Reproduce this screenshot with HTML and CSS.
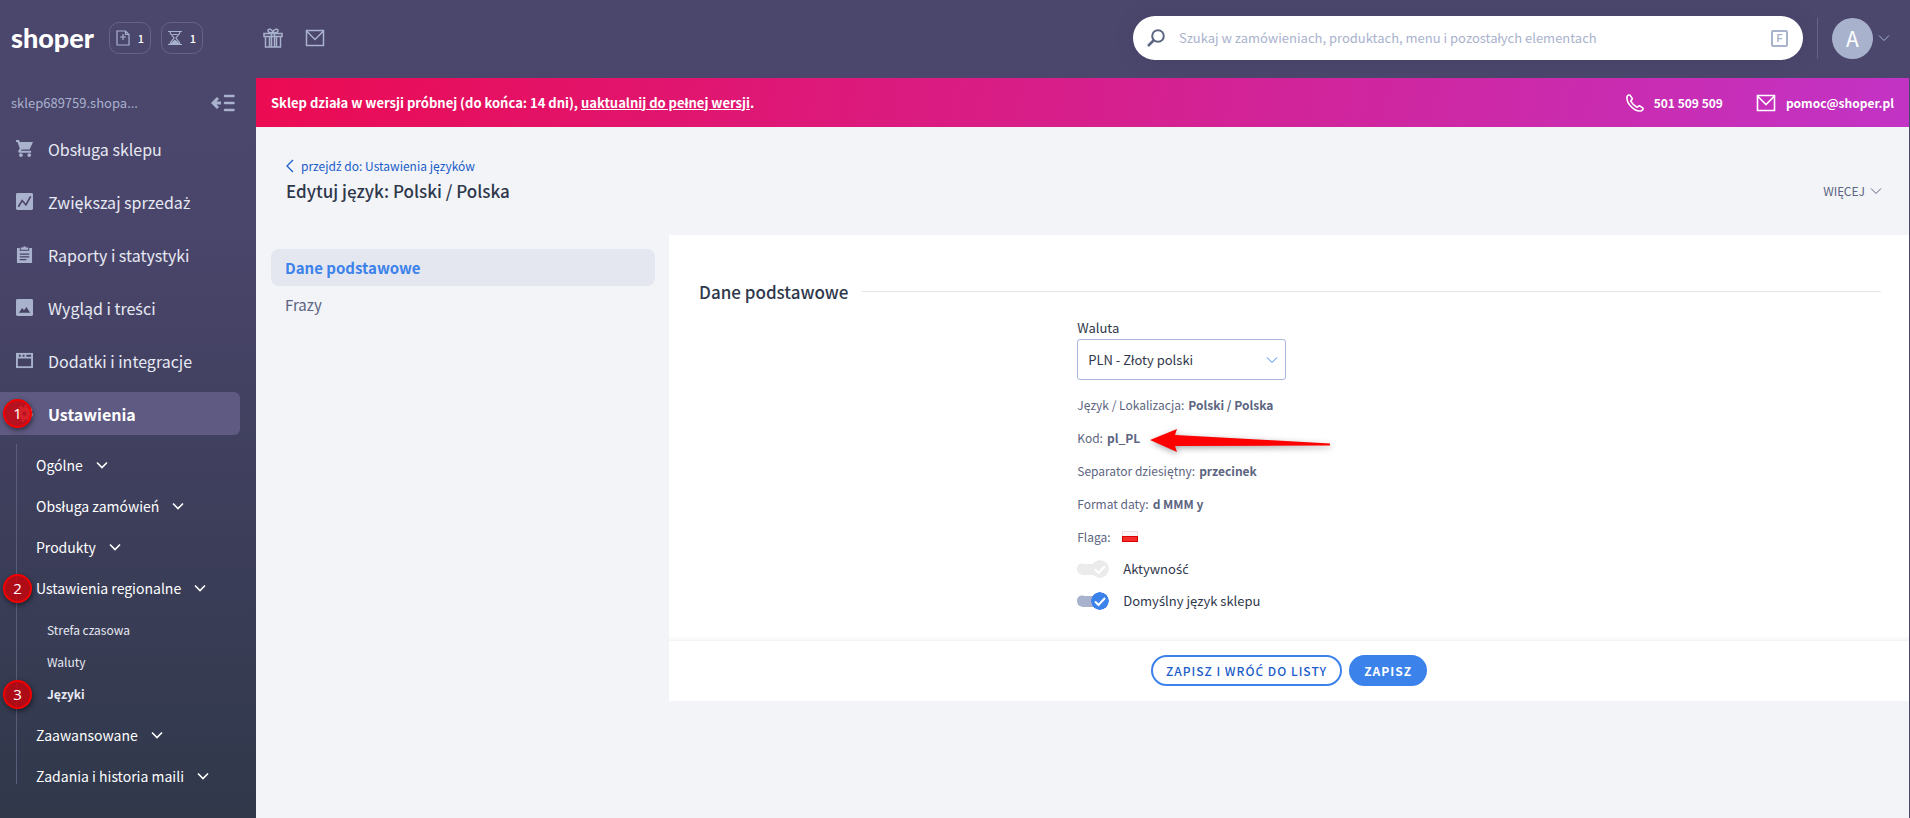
FILE: index.html
```html
<!DOCTYPE html>
<html lang="pl">
<head>
<meta charset="utf-8">
<title>Edytuj język: Polski / Polska</title>
<link rel="stylesheet" href="styles.css">
</head>
<body>
<svg class="sprite" aria-hidden="true">
  <symbol id="chevron" viewBox="0 0 12 12"><path d="M1 3.5l5 5 5-5" fill="none" stroke="currentColor"/></symbol>
  <symbol id="mail" viewBox="0 0 20 18"><path d="M1.5 1.5h17v15h-17zM1.5 2l8.500 8.500L18.500 2" fill="none" stroke="currentColor"/></symbol>
  <symbol id="tick" viewBox="0 0 32 18"><path d="M18 9.500l3.500 3.500 6.500-7" fill="none" stroke="#fff" stroke-width="2"/></symbol>
</svg>
<header class="topbar">
  <div class="brand">
    <a class="logo" href="#">shoper</a>
    <div class="counters">
      <button class="counter" type="button">
        <svg width="14" height="16" viewBox="0 0 14 16" fill="none" stroke="currentColor" stroke-width="1.200"><path d="M1 1h8.500L13 4.500V15H1zM9.500 1v3.500H13M7 4v6M4 7h6"/></svg>
        <span>1</span>
      </button>
      <button class="counter" type="button">
        <svg width="14" height="16" viewBox="0 0 14 16" fill="none" stroke="currentColor" stroke-width="1.200"><path d="M0 1.500h14M0 14.500h14M2 1.500C2 5 6 6.500 6 8s-4 3-4 6.500M12 1.500C12 5 8 6.500 8 8s4 3 4 6.500M4.500 4.500h5"/><path d="M3.500 14c.5-2 2-2.500 3.500-3.500 1.500 1 3 1.500 3.500 3.500z" fill="currentColor"/></svg>
        <span>1</span>
      </button>
    </div>
  </div>
  <div class="quick">
    <button class="icon-button" type="button" aria-label="Prezenty">
      <svg width="20" height="20" viewBox="0 0 20 20" fill="none" stroke="currentColor" stroke-width="1.500"><path d="M1 5.500h18v3H1zM2.500 8.500v10.500h15V8.500M6.500 8.500V19M13.500 8.500V19M8.500 5.500V19M11.500 5.500V19M10 5C8 5 5 4.500 5 2.800 5 .3 9 .5 10 4.500 11 .5 15 .3 15 2.800 15 4.500 12 5 10 5z"/></svg>
    </button>
    <button class="icon-button" type="button" aria-label="Wiadomości">
      <svg width="20" height="18"><use href="#mail" stroke-width="1.500"/></svg>
    </button>
  </div>
  <form class="search">
    <svg class="search-glass" width="18" height="18" viewBox="0 0 18 18" fill="none" stroke="currentColor" stroke-width="2"><circle cx="11" cy="7" r="5.800"/><path d="M7 11l-6 6" stroke-width="2.500"/></svg>
    <input class="search-input" type="search" aria-label="Szukaj" placeholder="Szukaj w zamówieniach, produktach, menu i pozostałych elementach">
    <kbd class="search-key">F</kbd>
  </form>
  <button class="account" type="button" aria-label="Konto">
    <span class="avatar">A</span>
    <svg width="12" height="12"><use href="#chevron"/></svg>
  </button>
</header>

<div class="layout">
  <nav class="sidebar">
    <div class="shop">
      <span>sklep689759.shopa...</span>
      <button class="icon-button" type="button" aria-label="Zwiń menu">
        <svg width="24" height="18" viewBox="0 0 24 18" fill="none" stroke="currentColor" stroke-width="3"><path d="M14 2h8.500M14 9h8.500M14 16h8.500" stroke-linecap="round" stroke-width="2.500"/><path d="M2 9h8M7 4L2 9l5 5"/></svg>
      </button>
    </div>
    <ul class="menu">
      <li><a class="menu-link" href="#"><svg class="menu-icon" viewBox="0 0 18 18" fill="currentColor"><path d="M0 0h3.200l1 2H18l-3.600 8H6l-.8 1.500H16v2H4c-1.500 0-2-1.500-1.300-2.600L4 9 1.500 2H0z"/><circle cx="5.200" cy="16" r="2"/><circle cx="14" cy="16" r="2"/></svg><span>Obsługa sklepu</span></a></li>
      <li><a class="menu-link" href="#"><svg class="menu-icon" viewBox="0 0 18 18"><rect width="18" height="18" rx="1.500" fill="currentColor"/><path d="M2.500 14.500l4-6.500 4 4.500 5-9" fill="none" stroke="#4b456c" stroke-width="1.800"/></svg><span>Zwiększaj sprzeda<span class="acute">ż</span></span></a></li>
      <li><a class="menu-link" href="#"><svg class="menu-icon" viewBox="0 0 18 18"><path d="M1 2h3v3h10V2h3v16H1zM5 1.500h2.500C8 0 10 0 10.500 1.500H13V4H5z" fill="currentColor"/><path d="M4 8.500h10M4 11.500h10M4 14.500h7" stroke="#474367" stroke-width="1.300"/></svg><span>Raporty i statystyki</span></a></li>
      <li><a class="menu-link" href="#"><svg class="menu-icon" viewBox="0 0 18 18"><rect width="18" height="18" rx="1.500" fill="currentColor"/><path d="M3 14.500l3.500-5 2 2.500 2.500-3.500 4 6z" fill="#464365"/></svg><span>Wygląd i tre<span class="acute">ś</span>ci</span></a></li>
      <li><a class="menu-link" href="#"><svg class="menu-icon" viewBox="0 0 18 18"><path d="M0 1h18v16H0z" fill="currentColor"/><path d="M2 7h14v8H2zM3 3h2v2H3zM7 3h2v2H7zM11 3h5v2h-5z" fill="#444263"/></svg><span>Dodatki i integracje</span></a></li>
      <li class="marked">
        <a class="menu-link active" href="#"><svg class="menu-icon" viewBox="0 0 18 18" fill="none" stroke="currentColor"><circle cx="9" cy="9" r="4.500" stroke-width="4.500"/><circle cx="9" cy="9" r="7.800" stroke-width="2.400" stroke-dasharray="3.100 3.030"/></svg><span>Ustawienia</span></a>
        <span class="badge">1</span>
      </li>
    </ul>
    <ul class="submenu">
      <li><a class="sub-link" href="#">Ogólne <svg class="sub-chevron"><use href="#chevron"/></svg></a></li>
      <li><a class="sub-link" href="#">Obsługa zamówień <svg class="sub-chevron"><use href="#chevron"/></svg></a></li>
      <li><a class="sub-link" href="#">Produkty <svg class="sub-chevron"><use href="#chevron"/></svg></a></li>
      <li class="marked">
        <a class="sub-link" href="#">Ustawienia regionalne <svg class="sub-chevron"><use href="#chevron"/></svg></a>
        <span class="badge badge-sub">2</span>
      </li>
      <li>
        <ul class="leaves">
          <li><a class="leaf" href="#">Strefa czasowa</a></li>
          <li><a class="leaf" href="#">Waluty</a></li>
          <li class="marked"><a class="leaf current" href="#">Języki</a><span class="badge badge-leaf">3</span></li>
        </ul>
      </li>
      <li><a class="sub-link" href="#">Zaawansowane <svg class="sub-chevron"><use href="#chevron"/></svg></a></li>
      <li><a class="sub-link" href="#">Zadania i historia maili <svg class="sub-chevron"><use href="#chevron"/></svg></a></li>
    </ul>
  </nav>

  <main class="main">
    <div class="banner">
      <p>Sklep działa w wersji próbnej (do końca: 14 dni), <a href="#">uaktualnij do pełnej wersji</a>.</p>
      <div class="contacts">
        <a class="contact" href="#"><svg width="18" height="18" viewBox="0 0 18 18" fill="none" stroke="currentColor" stroke-width="1.600"><path d="M1.200 2.200C2 1 3.500.6 4.200 1.400L6.300 4.600C6.500 5.600 4.800 6 4.800 7.200 6 9.500 8.500 12 11 13.200 12.200 13.200 12.400 11.500 13.500 11.800L16.700 13.800C17.500 14.800 16.800 16 15.500 16.800 9 18.500-.5 9 1.200 2.200z"/></svg>501 509 509</a>
        <a class="contact" href="#"><svg width="20" height="18"><use href="#mail" stroke-width="1.600"/></svg>pomoc@shoper.pl</a>
      </div>
    </div>
    <div class="page-head">
      <div>
        <a class="back" href="#"><svg width="8" height="14" viewBox="0 0 8 14" fill="none" stroke="currentColor" stroke-width="1.300"><path d="M7 1L1 7l6 6"/></svg><span>przejd<span class="acute">ź</span> do: Ustawienia języków</span></a>
        <h1 class="title">Edytuj język: Polski / Polska</h1>
      </div>
      <button class="more" type="button">WIĘCEJ <svg width="12" height="12"><use href="#chevron"/></svg></button>
    </div>
    <div class="content">
      <nav class="tabs">
        <a class="tab selected" href="#">Dane podstawowe</a>
        <a class="tab" href="#">Frazy</a>
      </nav>
      <form class="panel">
        <div class="panel-body">
          <h2 class="section-title">Dane podstawowe</h2>
          <div class="fields">
            <div class="field">
              <label class="label" for="currency">Waluta</label>
              <div class="select">
                <select id="currency"><option>PLN - Złoty polski</option></select>
                <svg width="12" height="12"><use href="#chevron"/></svg>
              </div>
            </div>
            <p class="row">Język / Lokalizacja: <b>Polski / Polska</b></p>
            <p class="row marked">Kod: <b>pl_PL</b>
              <svg class="arrow" width="190" height="36" viewBox="0 0 190 36"><path d="M4 15L31 4l-2 6 155 8.500v2L29 21l2 6z" fill="#f00"/></svg>
            </p>
            <p class="row">Separator dziesiętny: <b>przecinek</b></p>
            <p class="row">Format daty: <b>d MMM y</b></p>
            <p class="row">Flaga: <svg class="flag" width="16" height="11" viewBox="0 0 16 11"><rect width="16" height="11" fill="#f0dede"/><rect x="1" y="1" width="14" height="5" fill="#f8f6f6"/><rect y="5" width="16" height="6" fill="#dc0000"/><rect x="1" y="6" width="14" height="4" fill="#f52a2a"/></svg></p>
            <label class="switch-row"><span class="switch"><input type="checkbox" checked disabled><svg width="32" height="18"><use href="#tick"/></svg></span><span>Aktywno<span class="acute">ść</span></span></label>
            <label class="switch-row"><span class="switch"><input type="checkbox" checked><svg width="32" height="18"><use href="#tick"/></svg></span><span>Domy<span class="acute">ś</span>lny język sklepu</span></label>
          </div>
        </div>
        <div class="actions">
          <button class="action" type="button">ZAPISZ I WRÓ<span class="acute">Ć</span> DO LISTY</button>
          <button class="action primary" type="submit">ZAPISZ</button>
        </div>
      </form>
    </div>
  </main>
</div>
</body>
</html>
```

FILE: styles.css
```css
* { box-sizing: border-box; }

body {
  margin: 0;
  min-height: 100vh;
  display: flex;
  flex-direction: column;
  background: #4b466c;
  color: #2f384b;
  font: 13px/20px "Noto Sans CJK SC", "Noto Sans", sans-serif;
}

ul, h1, h2, p { margin: 0; padding: 0; }
ul { list-style: none; }
a { color: inherit; text-decoration: none; }
button { padding: 0; border: 0; background: none; color: inherit; font: inherit; cursor: pointer; }
svg { display: block; flex: none; }
.sprite { position: absolute; width: 0; height: 0; }
.marked { position: relative; }

/* Polish letters that the main family has no glyphs for */
.acute { font-family: "Noto Sans", sans-serif; line-height: 1; }

/* Top bar */
.topbar { display: flex; align-items: center; height: 78px; padding: 0 20px 2px 0; color: #a9b2cd; }
.brand { display: flex; align-items: center; width: 256px; padding-left: 11px; }
.logo { width: 98px; color: #fff; font: 900 27px/32px Lato, sans-serif; }
.counters { display: flex; gap: 10px; }
.counter { display: flex; align-items: center; justify-content: center; gap: 8px; width: 42px; height: 32px; border: 1px solid #676288; border-radius: 10px; }
.counter span { color: #fff; font-size: 11px; font-weight: 500; }
.quick { display: flex; align-items: center; gap: 22px; padding-left: 7px; }
.icon-button { color: #a9b2cd; }
.search { display: flex; align-items: center; width: 670px; height: 44px; margin-left: auto; padding: 0 15px 0 14px; border-radius: 22px; background: #fff; box-shadow: 0 0 20px rgba(50, 45, 80, .15); }
.search-glass { color: #5c6581; }
.search-input { flex: 1; min-width: 0; padding: 0 0 0 14px; border: 0; outline: 0; background: none; color: #2f384b; font: inherit; }
.search-input::placeholder { color: #a9b2cd; opacity: 1; }
.search-key { width: 17px; height: 17px; border: 2px solid #a9b2cd; border-radius: 2px; color: #a9b2cd; font: bold 10px/14px "Liberation Sans", sans-serif; text-align: center; }
.account { display: flex; align-items: center; gap: 5px; height: 40px; margin-left: 14px; padding-left: 14px; border-left: 1px solid #676288; }
.avatar { width: 41px; height: 41px; border-radius: 50%; background: #a9b2cd; color: #fff; font-size: 21px; line-height: 40px; }

/* Sidebar */
.layout { display: flex; flex: 1; }
.sidebar { flex: 0 0 256px; background: linear-gradient(#4b466c, #4a456b 20%, #30384a); color: #e6e9f2; }
.shop { display: flex; align-items: center; justify-content: space-between; height: 49px; padding: 0 21px 0 11px; color: #a9b2cd; }
.menu { display: flex; flex-direction: column; gap: 10px; }
.menu-link { display: flex; align-items: center; gap: 15px; height: 43px; margin-right: 16px; padding-left: 16px; border-radius: 0 6px 6px 0; font-size: 16px; }
.menu-link.active { background: #5f5a82; color: #fff; font-weight: 700; }
.menu-icon { width: 17px; height: 17px; color: #a9b2cd; }
.active .menu-icon { color: #ff9aa0; }
.badge { position: absolute; left: 3px; top: 7px; width: 29px; height: 29px; border: 2px solid #f20000; border-radius: 50%; background: rgba(204, 0, 8, .8); box-shadow: 1px 2px 5px rgba(0, 0, 0, .5); color: #fff; font: 15px/25px "Open Sans", sans-serif; text-align: center; }
.submenu { margin: 9px 0 0 16px; padding-left: 1px; background: linear-gradient(#5c5b7a, #5c5b7a) 0 0 / 1px calc(100% - 12px) no-repeat; }
.sub-link { display: flex; align-items: center; gap: 13px; height: 41px; padding-left: 19px; color: #fff; font-size: 14px; }
.sub-chevron { width: 12px; height: 12px; stroke-width: 1.600; }
.badge-sub { left: -14px; }
.badge-leaf { left: -14px; top: 2px; }
.leaves { padding: 6px 0 4px; }
.leaf { display: flex; align-items: center; height: 32px; padding-left: 30px; font-size: 12px; }
.leaf.current { font-weight: 700; }

/* Main column */
.main { flex: 1; min-width: 0; margin-right: 1px; background: #f2f4f8; }
.banner { display: flex; align-items: center; justify-content: space-between; height: 49px; padding: 0 15px; background: linear-gradient(100deg, #eb0b52, #c233c5); color: #fff; font-weight: 700; }
.banner p a { text-decoration: underline; }
.contacts { display: flex; gap: 33px; font-size: 12px; }
.contact { display: flex; align-items: center; gap: 10px; }
.page-head { display: flex; align-items: flex-end; justify-content: space-between; height: 108px; padding: 0 27px 32px 30px; }
.back { display: flex; align-items: center; gap: 7px; margin-bottom: 3px; color: #1b5cc9; font-size: 12px; }
.title { font-size: 17px; font-weight: 500; line-height: 24px; }
.more { display: flex; align-items: center; gap: 5px; color: #5c6581; font-size: 12px; line-height: 24px; }
.content { display: grid; grid-template-columns: 384px 1fr; gap: 14px; padding-left: 15px; }
.tabs { padding-top: 14px; }
.tab { display: block; padding: 0 14px; border-radius: 8px; color: #5c6581; font-size: 15px; line-height: 37px; }
.tab.selected { background: #e4e7f0; color: #3c82eb; font-weight: 700; }

/* Form */
.panel { background: #fff; }
.panel-body { padding: 43px 28px 20px 30px; box-shadow: inset 0 -6px 6px -6px rgba(0, 0, 0, .1); }
.section-title { display: flex; align-items: center; gap: 14px; font-size: 17px; font-weight: 500; line-height: 28px; }
.section-title::after { content: ""; flex: 1; height: 1px; margin-bottom: 2px; background: #e6e6e6; }
.fields { padding: 10px 0 4px 32%; }
.field { margin-bottom: 8px; }
.label { display: block; line-height: 23px; }
.select { display: grid; align-items: center; width: 209px; }
.select > * { grid-area: 1 / 1; }
.select select { height: 41px; padding: 0 10px; border: 1px solid #a9b7dd; border-radius: 3px; background: #fff; color: #2f384b; font: inherit; appearance: none; }
.select svg { justify-self: end; margin-right: 8px; color: #3c82eb; pointer-events: none; }
.row { display: flex; align-items: center; gap: 4px; height: 33px; color: #5c6581; font-size: 12px; }
.flag { margin-left: 7px; }
.arrow { position: absolute; left: 69px; top: 4px; filter: drop-shadow(1px 2px 3px rgba(0, 0, 0, .35)); }
.switch-row { display: flex; align-items: center; gap: 14px; height: 32px; }
.switch { display: grid; align-items: center; width: 32px; }
.switch > * { grid-area: 1 / 1; }
.switch input { width: 32px; height: 18px; margin: 0; border-radius: 9px; appearance: none; background: radial-gradient(circle at 23px 9px, #3c82eb 8.5px, transparent 9px), radial-gradient(circle at 5px 9px, #a9b2cd 5px, transparent 6px) 0 0 / 11px 18px no-repeat, linear-gradient(#a9b2cd, #a9b2cd) 5px 50% / 14px 11px no-repeat; }
.switch input:disabled { background: radial-gradient(circle at 23px 9px, #ebebeb 8.5px, transparent 9px), radial-gradient(circle at 5px 9px, #ebebeb 5px, transparent 6px) 0 0 / 11px 18px no-repeat, linear-gradient(#ebebeb, #ebebeb) 5px 50% / 14px 11px no-repeat; }
.switch svg { pointer-events: none; }
.actions { display: flex; justify-content: center; gap: 7px; padding: 14px 0 15px; }
.action { height: 31px; padding: 0 13px; border: 2px solid #3c82eb; border-radius: 16px; color: #1b5cc9; font-size: 12px; font-weight: 500; line-height: 20px; letter-spacing: 1px; }
.action.primary { background: #3c82eb; color: #fff; font-weight: 700; }
```
